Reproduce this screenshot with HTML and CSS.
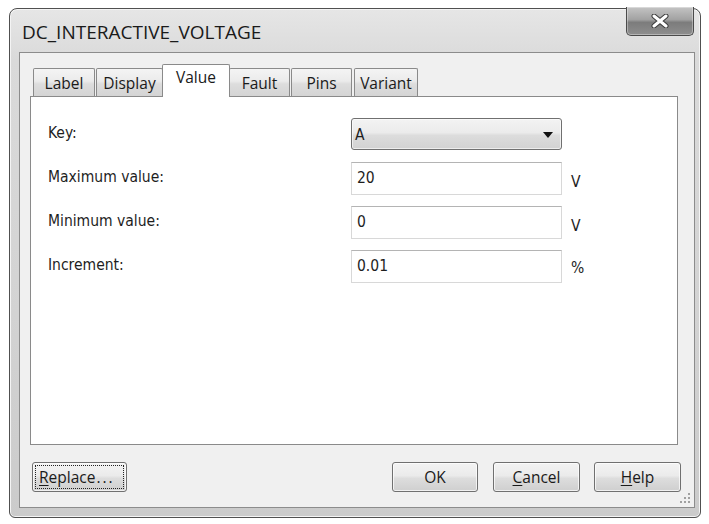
FILE: index.html
```html
<!DOCTYPE html>
<html>
<head>
<meta charset="utf-8">
<link rel="stylesheet" href="styles.css">
</head>
<body>
<div class="window">
  <div class="titlebar">
    <span class="title">DC_INTERACTIVE_VOLTAGE</span>
    <div class="close">
      <svg width="22" height="14" viewBox="0 0 22 14">
        <path d="M5 2 L17 12 M17 2 L5 12" stroke="#3a3a3a" stroke-width="5" stroke-linecap="round"/>
        <path d="M5 2 L17 12 M17 2 L5 12" stroke="#ffffff" stroke-width="3" stroke-linecap="round"/>
      </svg>
    </div>
  </div>
  <div class="client">
    <div class="tabs">
      <div class="tab t-label">Label</div>
      <div class="tab t-display">Display</div>
      <div class="tab t-value selected">Value</div>
      <div class="tab t-fault">Fault</div>
      <div class="tab t-pins">Pins</div>
      <div class="tab t-variant">Variant</div>
    </div>
    <div class="panel">
      <div class="row">
        <span class="lbl">Key:</span>
        <div class="combo"><span>A</span><span class="arrow"></span></div>
      </div>
      <div class="row">
        <span class="lbl">Maximum value:</span>
        <div class="field">20</div>
        <span class="unit">V</span>
      </div>
      <div class="row">
        <span class="lbl">Minimum value:</span>
        <div class="field">0</div>
        <span class="unit">V</span>
      </div>
      <div class="row">
        <span class="lbl">Increment:</span>
        <div class="field">0.01</div>
        <span class="unit pct">%</span>
      </div>
    </div>
    <div class="buttons">
      <div class="btn replace"><span class="focus"><u>R</u>eplace<span class="dots">...</span></span></div>
      <div class="spacer"></div>
      <div class="btn ok">OK</div>
      <div class="btn cancel"><u>C</u>ancel</div>
      <div class="btn help"><u>H</u>elp</div>
    </div>
    <svg class="grip" width="12" height="12" viewBox="0 0 12 12">
      <rect x="9" y="1" width="2" height="2" fill="#a0a0a0"/>
      <rect x="5" y="5" width="2" height="2" fill="#a0a0a0"/>
      <rect x="9" y="5" width="2" height="2" fill="#a0a0a0"/>
      <rect x="1" y="9" width="2" height="2" fill="#a0a0a0"/>
      <rect x="5" y="9" width="2" height="2" fill="#a0a0a0"/>
      <rect x="9" y="9" width="2" height="2" fill="#a0a0a0"/>
    </svg>
  </div>
</div>
</body>
</html>
```
FILE: styles.css
```css
* { box-sizing: border-box; }
html, body { margin: 0; padding: 0; background: #ffffff; }
body { width: 709px; height: 524px; overflow: hidden; }

.window {
  margin: 8px 0 0 9px;
  width: 692px;
  height: 510px;
  border: 1px solid #505050;
  border-radius: 8px 8px 6px 6px;
  background: linear-gradient(to bottom, #e6e6e6 0%, #dadada 10%, #d3d3d3 60%, #cbcbcb 100%);
  box-shadow: inset 0 0 0 1px #f4f4f4;
  padding: 0 5px 9px 9px;
  display: flex;
  flex-direction: column;
}

.titlebar {
  height: 43px;
  display: flex;
  align-items: flex-start;
  justify-content: space-between;
}
.title {
  font-family: "Open Sans", "Liberation Sans", sans-serif;
  font-size: 19px;
  line-height: 24px;
  color: #1a1a1a;
  margin: 11px 0 0 3px;
}
.close {
  width: 68px;
  height: 29px;
  margin-top: -2px;
  margin-right: 1px;
  border: 1px solid #4a4a4a;
  border-top: none;
  border-radius: 0 0 5px 5px;
  background: linear-gradient(to bottom, #c4c4c4 0%, #a2a2a2 45%, #7c7c7c 55%, #8e8e8e 100%);
  box-shadow: inset 0 0 0 1px rgba(255,255,255,0.35);
  display: flex;
  align-items: center;
  justify-content: center;
}

.client {
  position: relative;
  flex: 1;
  border: 1px solid #8c8c8c;
  background: #f0f0f0;
  display: flex;
  flex-direction: column;
}

.tabs {
  height: 43px;
  padding-left: 13px;
  display: flex;
  align-items: flex-end;
  position: relative;
  z-index: 2;
}
.tab {
  height: 28px;
  border: 1px solid #8a8a8a;
  border-bottom: none;
  border-radius: 2px 2px 0 0;
  background: linear-gradient(to bottom, #f4f4f4 0%, #ebebeb 45%, #dddddd 55%, #d4d4d4 100%);
  font-family: "Open Sans", "Liberation Sans", sans-serif;
  font-size: 15.5px;
  color: #1a1a1a;
  display: flex;
  align-items: center;
  justify-content: center;
  padding-top: 1px;
}
.t-label { width: 62px; }
.t-display { width: 67px; margin-left: 1px; }
.t-value { width: 68px; }
.t-fault { width: 61px; }
.t-pins { width: 61px; margin-left: 1px; }
.t-variant { width: 64px; margin-left: 2px; }
.tab.selected {
  height: 33px;
  margin-bottom: -1px;
  background: #ffffff;
  align-items: flex-start;
  padding-top: 1px;
  margin-left: -1px;
  margin-right: -1px;
}

.panel {
  margin-left: 10px;
  width: 648px;
  height: 349px;
  border: 1px solid #8a8a8a;
  background: #ffffff;
  padding: 15px 0 0 17px;
  display: flex;
  flex-direction: column;
}
.row {
  height: 44px;
  display: flex;
  align-items: center;
}
.lbl, .field, .combo, .unit {
  font-family: "DejaVu Sans Condensed", "DejaVu Sans", "Liberation Sans", sans-serif;
  font-size: 15.5px;
  color: #1e1e1e;
}
.lbl {
  width: 303px;
  margin-top: -3px;
}
.field {
  width: 211px;
  height: 33px;
  border: 1px solid #d8d8d8;
  border-top-color: #b4b4b4;
  background: #ffffff;
  padding: 0 5px;
  display: flex;
  align-items: center;
}
.combo {
  width: 211px;
  height: 32px;
  border: 1px solid #707070;
  border-radius: 3px;
  background: linear-gradient(to bottom, #f3f3f3 0%, #ebebeb 45%, #dcdcdc 55%, #d2d2d2 100%);
  box-shadow: inset 0 0 0 1px rgba(255,255,255,0.6);
  padding: 2px 8px 0 3px;
  display: flex;
  align-items: center;
  justify-content: space-between;
}
.arrow {
  width: 0;
  height: 0;
  border-left: 5px solid transparent;
  border-right: 5px solid transparent;
  border-top: 6px solid #111111;
}
.unit {
  margin-left: 9px;
  margin-top: 7px;
}
.unit.pct { margin-top: 3px; }

.buttons {
  display: flex;
  align-items: center;
  padding: 0 13px 0 12px;
  margin-top: 17px;
}
.spacer { flex: 1; }
.btn {
  height: 30px;
  border: 1px solid #707070;
  border-radius: 3px;
  background: linear-gradient(to bottom, #f3f3f3 0%, #ebebeb 45%, #dddddd 55%, #cfcfcf 100%);
  box-shadow: inset 0 0 0 1px rgba(255,255,255,0.7);
  font-family: "Open Sans", "Liberation Sans", sans-serif;
  font-size: 15.5px;
  color: #1a1a1a;
  display: flex;
  align-items: center;
  justify-content: center;
}
.btn u { text-underline-offset: 2px; }
.replace { width: 95px; padding: 2px; }
.replace .focus {
  flex: 1;
  height: 100%;
  border: 1px dotted #222222;
  display: flex;
  align-items: center;
  padding-left: 3px;
}
.dots { letter-spacing: 2px; margin-left: 1px; }
.ok { width: 86px; }
.cancel { width: 87px; margin-left: 15px; }
.help { width: 87px; margin-left: 14px; }

.grip {
  position: absolute;
  right: 3px;
  bottom: 3px;
}
```
